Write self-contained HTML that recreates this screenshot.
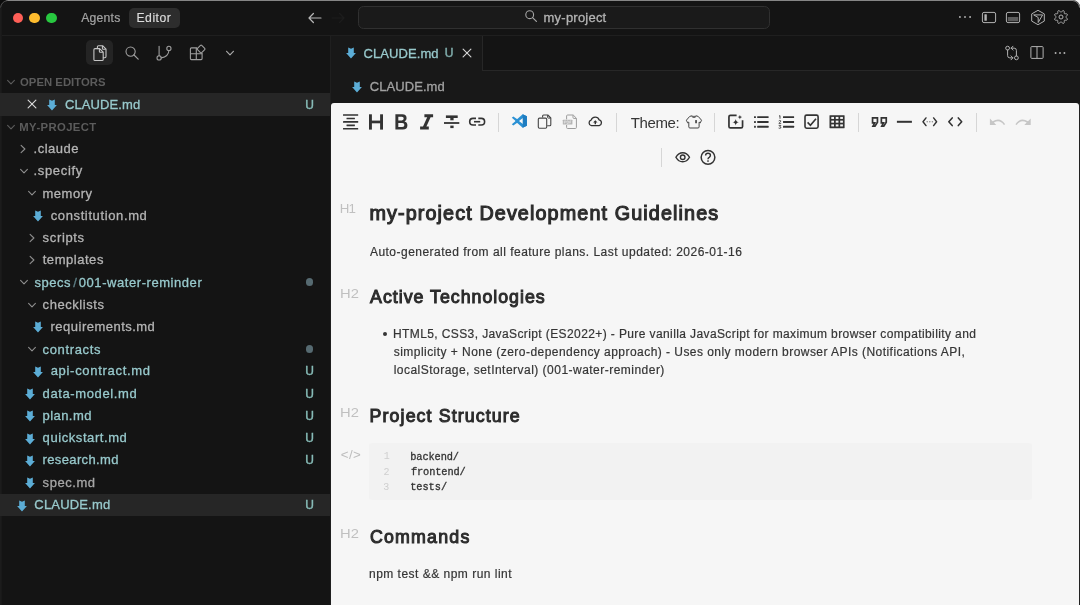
<!DOCTYPE html>
<html><head><meta charset="utf-8"><title>CLAUDE.md - my-project</title>
<style>

html,body{margin:0;padding:0;}
body{width:1080px;height:605px;position:relative;overflow:hidden;background:#141414;
 font-family:"Liberation Sans",sans-serif;}
.t{position:absolute;white-space:pre;line-height:1;}
.b{position:absolute;}
#txt{position:absolute;left:0;top:0;width:1080px;height:605px;will-change:transform;}
svg{position:absolute;overflow:visible;}

</style></head>
<body>

<!-- chrome -->
<div class="b" style="left:0;top:0;width:1080px;height:35px;background:#141414;border-bottom:1px solid #1f1f1f;"></div>
<div class="b" style="left:331px;top:36px;width:749px;height:67px;background:#181818;"></div>
<div class="b" style="left:482px;top:36px;width:597px;height:34px;background:#141414;border-bottom:1px solid #272727;border-left:1px solid #272727;"></div>
<div class="b" style="left:330px;top:36px;width:1px;height:569px;background:#1f1f1f;"></div>
<!-- window top edge -->
<div class="b" style="left:6px;top:0;width:1067px;height:1px;background:#868686;"></div>
<div class="b" style="left:0;top:8px;width:2px;height:597px;background:linear-gradient(90deg,#1e1e1e,#171717);"></div>
<svg style="left:0;top:0" width="10" height="10" viewBox="0 0 10 10"><path d="M0 0 L7 0 A7.5 7.5 0 0 0 0 7 Z" fill="#0c0c0c"/><path d="M0.6 7.6 A7.5 7.5 0 0 1 7.4 0.6" fill="none" stroke="#4c4c4c" stroke-width="1"/></svg>
<svg style="left:1070px;top:0" width="10" height="10" viewBox="0 0 10 10"><path d="M3 0 L10 0 L10 7.5 A7.5 7.5 0 0 0 3 0 Z" fill="#f2f2f2"/><path d="M2.5 0.5 A7.5 7.5 0 0 1 9.6 7.6" fill="none" stroke="#8a8a8a" stroke-width="1"/></svg>
<!-- traffic lights -->
<div class="b" style="left:12.6px;top:12.7px;width:10.6px;height:10.6px;border-radius:50%;background:#fe5f57;"></div>
<div class="b" style="left:29.3px;top:12.7px;width:10.6px;height:10.6px;border-radius:50%;background:#febc2e;"></div>
<div class="b" style="left:46.0px;top:12.7px;width:10.6px;height:10.6px;border-radius:50%;background:#28c840;"></div>
<!-- Editor pill -->
<div class="b" style="left:129px;top:7.5px;width:50.5px;height:20px;border-radius:5px;background:#2d2d2d;"></div>
<!-- search box -->
<div class="b" style="left:358px;top:5.9px;width:409.5px;height:21px;border-radius:5.5px;background:#1a1a1a;border:1px solid #303030;"></div>
<!-- activity active bg -->
<div class="b" style="left:86.3px;top:39.5px;width:26.7px;height:25.6px;border-radius:5px;background:#242424;"></div>
<!-- selected rows -->
<div class="b" style="left:0;top:93.3px;width:330px;height:22.5px;background:#262626;"></div>
<div class="b" style="left:0;top:494.1px;width:330px;height:21.9px;background:#262626;"></div>
<!-- git dots -->
<div class="b" style="left:305.8px;top:278.4px;width:7.6px;height:7.6px;border-radius:50%;background:#566a71;"></div>
<div class="b" style="left:305.8px;top:345.3px;width:7.6px;height:7.6px;border-radius:50%;background:#566a71;"></div>
<!-- markdown page -->
<div class="b" style="left:331px;top:103px;width:747.7px;height:502px;background:#f6f6f6;border-radius:3px 3px 0 0;"></div>
<div class="b" style="left:1078.7px;top:103px;width:1.3px;height:502px;background:#222;"></div>
<!-- toolbar dividers -->
<div class="b" style="left:498px;top:112.5px;width:1px;height:19px;background:#d6d6d6;"></div>
<div class="b" style="left:616px;top:112.5px;width:1px;height:19px;background:#d6d6d6;"></div>
<div class="b" style="left:714px;top:112.5px;width:1px;height:19px;background:#d6d6d6;"></div>
<div class="b" style="left:857.5px;top:112.5px;width:1px;height:19px;background:#d6d6d6;"></div>
<div class="b" style="left:976px;top:112.5px;width:1px;height:19px;background:#d6d6d6;"></div>
<div class="b" style="left:661px;top:148px;width:1px;height:19px;background:#d6d6d6;"></div>
<!-- code block -->
<div class="b" style="left:368.7px;top:442.5px;width:663px;height:57.5px;border-radius:3px;background:#f2f2f2;"></div>
<!-- list bullet -->
<div class="b" style="left:383.0px;top:332.0px;width:4.4px;height:4.4px;border-radius:50%;background:#353535;"></div>

<!-- text (own compositing layer => greyscale AA) -->
<div id="txt">
<span class="t" style="left:81.21px;top:12px;font-size:12.2px;color:#a4a4a4;letter-spacing:0.215px;-webkit-text-stroke:0.2px #a4a4a4;">Agents</span>
<span class="t" style="left:136.50px;top:12px;font-size:12.2px;color:#dedede;letter-spacing:0.491px;-webkit-text-stroke:0.15px #dedede;">Editor</span>
<span class="t" style="left:543.57px;top:11px;font-size:13px;color:#b4b4b4;letter-spacing:0.221px;-webkit-text-stroke:0.3px #b4b4b4;">my-project</span>
<span class="t" style="left:363.55px;top:47px;font-size:13px;color:#98c9cc;letter-spacing:0.071px;-webkit-text-stroke:0.3px #98c9cc;">CLAUDE.md</span>
<span class="t" style="left:444.69px;top:47px;font-size:12px;color:#7eaaa9;letter-spacing:-0.033px;-webkit-text-stroke:0.5px #7eaaa9;">U</span>
<span class="t" style="left:369.75px;top:80px;font-size:13px;color:#a2a2a2;letter-spacing:0.071px;-webkit-text-stroke:0.3px #a2a2a2;">CLAUDE.md</span>
<span class="t" style="left:20.03px;top:77px;font-size:11.3px;color:#5c5c5c;font-weight:bold;letter-spacing:0.035px;">OPEN EDITORS</span>
<span class="t" style="left:19.30px;top:122px;font-size:11.3px;color:#5c5c5c;font-weight:bold;letter-spacing:0.389px;">MY-PROJECT</span>
<span class="t" style="left:65.05px;top:98px;font-size:13px;color:#98c9cc;letter-spacing:0.096px;-webkit-text-stroke:0.3px #98c9cc;">CLAUDE.md</span>
<span class="t" style="left:33.54px;top:142px;font-size:13px;color:#b4b4b4;letter-spacing:0.511px;-webkit-text-stroke:0.3px #b4b4b4;">.claude</span>
<span class="t" style="left:33.54px;top:164px;font-size:13px;color:#b4b4b4;letter-spacing:0.661px;-webkit-text-stroke:0.3px #b4b4b4;">.specify</span>
<span class="t" style="left:42.47px;top:187px;font-size:13px;color:#b4b4b4;letter-spacing:0.519px;-webkit-text-stroke:0.3px #b4b4b4;">memory</span>
<span class="t" style="left:50.69px;top:209px;font-size:13px;color:#b4b4b4;letter-spacing:0.623px;-webkit-text-stroke:0.3px #b4b4b4;">constitution.md</span>
<span class="t" style="left:42.60px;top:231px;font-size:13px;color:#b4b4b4;letter-spacing:0.654px;-webkit-text-stroke:0.3px #b4b4b4;">scripts</span>
<span class="t" style="left:42.72px;top:253px;font-size:13px;color:#b4b4b4;letter-spacing:0.537px;-webkit-text-stroke:0.3px #b4b4b4;">templates</span>
<span class="t" style="left:34.40px;top:276px;font-size:13px;color:#98c9cc;letter-spacing:0.522px;-webkit-text-stroke:0.3px #98c9cc;">specs</span>
<span class="t" style="left:73.15px;top:276px;font-size:13px;color:#5f8087;letter-spacing:-0.980px;-webkit-text-stroke:0.3px #5f8087;">/</span>
<span class="t" style="left:78.80px;top:276px;font-size:13px;color:#98c9cc;letter-spacing:0.559px;-webkit-text-stroke:0.3px #98c9cc;">001-water-reminder</span>
<span class="t" style="left:42.59px;top:298px;font-size:13px;color:#b4b4b4;letter-spacing:0.558px;-webkit-text-stroke:0.3px #b4b4b4;">checklists</span>
<span class="t" style="left:50.57px;top:320px;font-size:13px;color:#b4b4b4;letter-spacing:0.482px;-webkit-text-stroke:0.3px #b4b4b4;">requirements.md</span>
<span class="t" style="left:42.59px;top:343px;font-size:13px;color:#98c9cc;letter-spacing:0.638px;-webkit-text-stroke:0.3px #98c9cc;">contracts</span>
<span class="t" style="left:50.68px;top:364px;font-size:13px;color:#98c9cc;letter-spacing:0.696px;-webkit-text-stroke:0.3px #98c9cc;">api-contract.md</span>
<span class="t" style="left:42.59px;top:387px;font-size:13px;color:#98c9cc;letter-spacing:0.621px;-webkit-text-stroke:0.3px #98c9cc;">data-model.md</span>
<span class="t" style="left:42.49px;top:409px;font-size:13px;color:#98c9cc;letter-spacing:0.453px;-webkit-text-stroke:0.3px #98c9cc;">plan.md</span>
<span class="t" style="left:42.59px;top:431px;font-size:13px;color:#98c9cc;letter-spacing:0.576px;-webkit-text-stroke:0.3px #98c9cc;">quickstart.md</span>
<span class="t" style="left:42.47px;top:453px;font-size:13px;color:#98c9cc;letter-spacing:0.384px;-webkit-text-stroke:0.3px #98c9cc;">research.md</span>
<span class="t" style="left:42.60px;top:476px;font-size:13px;color:#a6a6a6;letter-spacing:0.551px;-webkit-text-stroke:0.3px #a6a6a6;">spec.md</span>
<span class="t" style="left:34.35px;top:498px;font-size:13px;color:#98c9cc;letter-spacing:0.171px;-webkit-text-stroke:0.3px #98c9cc;">CLAUDE.md</span>
<span class="t" style="left:305.30px;top:99px;font-size:12px;color:#88bdb9;letter-spacing:0.969px;-webkit-text-stroke:0.4px #88bdb9;">U</span>
<span class="t" style="left:305.30px;top:365px;font-size:12px;color:#88bdb9;letter-spacing:0.969px;-webkit-text-stroke:0.4px #88bdb9;">U</span>
<span class="t" style="left:305.30px;top:388px;font-size:12px;color:#88bdb9;letter-spacing:0.969px;-webkit-text-stroke:0.4px #88bdb9;">U</span>
<span class="t" style="left:305.30px;top:410px;font-size:12px;color:#88bdb9;letter-spacing:0.969px;-webkit-text-stroke:0.4px #88bdb9;">U</span>
<span class="t" style="left:305.30px;top:432px;font-size:12px;color:#88bdb9;letter-spacing:0.969px;-webkit-text-stroke:0.4px #88bdb9;">U</span>
<span class="t" style="left:305.30px;top:454px;font-size:12px;color:#88bdb9;letter-spacing:0.969px;-webkit-text-stroke:0.4px #88bdb9;">U</span>
<span class="t" style="left:305.30px;top:499px;font-size:12px;color:#88bdb9;letter-spacing:0.969px;-webkit-text-stroke:0.4px #88bdb9;">U</span>
<span class="t" style="left:630.72px;top:115px;font-size:15px;color:#363636;letter-spacing:-0.378px;">Theme:</span>
<span class="t" style="left:339.75px;top:202px;font-size:13.3px;color:#c0c0c0;letter-spacing:-0.8px;">H1</span>
<span class="t" style="left:369.39px;top:204px;font-size:19.8px;color:#2c2c2c;letter-spacing:1.107px;-webkit-text-stroke:1.1px #2c2c2c;">my-project Development Guidelines</span>
<span class="t" style="left:369.91px;top:246px;font-size:12.0px;color:#353535;letter-spacing:0.480px;-webkit-text-stroke:0.2px #353535;">Auto-generated from all feature plans. Last updated: 2026-01-16</span>
<span class="t" style="left:339.68px;top:287px;font-size:13.3px;color:#c0c0c0;transform:scaleX(1.11);transform-origin:0 0;">H2</span>
<span class="t" style="left:370.09px;top:289px;font-size:17.8px;color:#2c2c2c;letter-spacing:0.986px;-webkit-text-stroke:1.0px #2c2c2c;">Active Technologies</span>
<span class="t" style="left:393.00px;top:328px;font-size:12.0px;color:#353535;letter-spacing:0.393px;-webkit-text-stroke:0.2px #353535;">HTML5, CSS3, JavaScript (ES2022+) - Pure vanilla JavaScript for maximum browser compatibility and</span>
<span class="t" style="left:393.77px;top:346px;font-size:12.0px;color:#353535;letter-spacing:0.455px;-webkit-text-stroke:0.2px #353535;">simplicity + None (zero-dependency approach) - Uses only modern browser APIs (Notifications API,</span>
<span class="t" style="left:393.67px;top:364px;font-size:12.0px;color:#353535;letter-spacing:0.477px;-webkit-text-stroke:0.2px #353535;">localStorage, setInterval) (001-water-reminder)</span>
<span class="t" style="left:339.68px;top:406px;font-size:13.3px;color:#c0c0c0;transform:scaleX(1.11);transform-origin:0 0;">H2</span>
<span class="t" style="left:369.59px;top:408px;font-size:17.8px;color:#2c2c2c;letter-spacing:1.107px;-webkit-text-stroke:1.0px #2c2c2c;">Project Structure</span>
<span class="t" style="left:340.87px;top:448px;font-size:13.3px;color:#bdbdbd;letter-spacing:0.366px;">&lt;/&gt;</span>
<span class="t" style="left:383.87px;top:452px;font-size:10px;color:#cfcfcf;font-family:'Liberation Mono',monospace;">1</span>
<span class="t" style="left:383.48px;top:468px;font-size:10px;color:#cfcfcf;font-family:'Liberation Mono',monospace;">2</span>
<span class="t" style="left:383.37px;top:483px;font-size:10px;color:#cfcfcf;font-family:'Liberation Mono',monospace;">3</span>
<span class="t" style="left:410.19px;top:452px;font-size:10.3px;color:#333;font-family:'Liberation Mono',monospace;letter-spacing:-0.081px;-webkit-text-stroke:0.3px #333;">backend/</span>
<span class="t" style="left:410.96px;top:467px;font-size:10.3px;color:#333;font-family:'Liberation Mono',monospace;letter-spacing:-0.100px;-webkit-text-stroke:0.3px #333;">frontend/</span>
<span class="t" style="left:410.15px;top:482px;font-size:10.3px;color:#333;font-family:'Liberation Mono',monospace;letter-spacing:-0.027px;-webkit-text-stroke:0.3px #333;">tests/</span>
<span class="t" style="left:339.68px;top:527px;font-size:13.3px;color:#c0c0c0;transform:scaleX(1.11);transform-origin:0 0;">H2</span>
<span class="t" style="left:369.89px;top:529px;font-size:17.8px;color:#2c2c2c;letter-spacing:1.221px;-webkit-text-stroke:1.0px #2c2c2c;">Commands</span>
<span class="t" style="left:368.98px;top:568px;font-size:12.0px;color:#353535;letter-spacing:0.488px;-webkit-text-stroke:0.2px #353535;">npm test &amp;&amp; npm run lint</span>
</div>

<!-- icons -->
<svg style="left:345.00px;top:47.20px" width="12" height="12" viewBox="-6 -6 12 12" ><path d="M-2.8 -5.5 L0 -4.3 L2.8 -5.5 L2.8 -0.1 L4.9 -0.1 L0 5.4 L-4.9 -0.1 L-2.8 -0.1 Z" fill="#5cadd6"/></svg>
<svg style="left:351.00px;top:80.80px" width="12" height="12" viewBox="-6 -6 12 12" ><path d="M-2.8 -5.5 L0 -4.3 L2.8 -5.5 L2.8 -0.1 L4.9 -0.1 L0 5.4 L-4.9 -0.1 L-2.8 -0.1 Z" fill="#5cadd6"/></svg>
<svg style="left:46.30px;top:98.50px" width="12" height="12" viewBox="-6 -6 12 12" ><path d="M-2.8 -5.5 L0 -4.3 L2.8 -5.5 L2.8 -0.1 L4.9 -0.1 L0 5.4 L-4.9 -0.1 L-2.8 -0.1 Z" fill="#5cadd6"/></svg>
<svg style="left:32.20px;top:209.90px" width="12" height="12" viewBox="-6 -6 12 12" ><path d="M-2.8 -5.5 L0 -4.3 L2.8 -5.5 L2.8 -0.1 L4.9 -0.1 L0 5.4 L-4.9 -0.1 L-2.8 -0.1 Z" fill="#5cadd6"/></svg>
<svg style="left:32.20px;top:321.30px" width="12" height="12" viewBox="-6 -6 12 12" ><path d="M-2.8 -5.5 L0 -4.3 L2.8 -5.5 L2.8 -0.1 L4.9 -0.1 L0 5.4 L-4.9 -0.1 L-2.8 -0.1 Z" fill="#5cadd6"/></svg>
<svg style="left:32.20px;top:365.86px" width="12" height="12" viewBox="-6 -6 12 12" ><path d="M-2.8 -5.5 L0 -4.3 L2.8 -5.5 L2.8 -0.1 L4.9 -0.1 L0 5.4 L-4.9 -0.1 L-2.8 -0.1 Z" fill="#5cadd6"/></svg>
<svg style="left:24.00px;top:388.14px" width="12" height="12" viewBox="-6 -6 12 12" ><path d="M-2.8 -5.5 L0 -4.3 L2.8 -5.5 L2.8 -0.1 L4.9 -0.1 L0 5.4 L-4.9 -0.1 L-2.8 -0.1 Z" fill="#5cadd6"/></svg>
<svg style="left:24.00px;top:410.42px" width="12" height="12" viewBox="-6 -6 12 12" ><path d="M-2.8 -5.5 L0 -4.3 L2.8 -5.5 L2.8 -0.1 L4.9 -0.1 L0 5.4 L-4.9 -0.1 L-2.8 -0.1 Z" fill="#5cadd6"/></svg>
<svg style="left:24.00px;top:432.70px" width="12" height="12" viewBox="-6 -6 12 12" ><path d="M-2.8 -5.5 L0 -4.3 L2.8 -5.5 L2.8 -0.1 L4.9 -0.1 L0 5.4 L-4.9 -0.1 L-2.8 -0.1 Z" fill="#5cadd6"/></svg>
<svg style="left:24.00px;top:454.98px" width="12" height="12" viewBox="-6 -6 12 12" ><path d="M-2.8 -5.5 L0 -4.3 L2.8 -5.5 L2.8 -0.1 L4.9 -0.1 L0 5.4 L-4.9 -0.1 L-2.8 -0.1 Z" fill="#5cadd6"/></svg>
<svg style="left:24.00px;top:477.26px" width="12" height="12" viewBox="-6 -6 12 12" ><path d="M-2.8 -5.5 L0 -4.3 L2.8 -5.5 L2.8 -0.1 L4.9 -0.1 L0 5.4 L-4.9 -0.1 L-2.8 -0.1 Z" fill="#5cadd6"/></svg>
<svg style="left:15.80px;top:499.54px" width="12" height="12" viewBox="-6 -6 12 12" ><path d="M-2.8 -5.5 L0 -4.3 L2.8 -5.5 L2.8 -0.1 L4.9 -0.1 L0 5.4 L-4.9 -0.1 L-2.8 -0.1 Z" fill="#5cadd6"/></svg>
<svg style="left:5.50px;top:76.80px" width="10" height="10" viewBox="-5 -5 10 10" ><path d="M-3.4 -1.7 L0 1.8 L3.4 -1.7" fill="none" stroke="#5c5c5c" stroke-width="1.1" stroke-linecap="round" stroke-linejoin="round"/></svg>
<svg style="left:5.50px;top:121.60px" width="10" height="10" viewBox="-5 -5 10 10" ><path d="M-3.4 -1.7 L0 1.8 L3.4 -1.7" fill="none" stroke="#5c5c5c" stroke-width="1.1" stroke-linecap="round" stroke-linejoin="round"/></svg>
<svg style="left:18.40px;top:143.56px" width="10" height="10" viewBox="-5 -5 10 10" ><path d="M-1.9 -3.6 L1.9 0 L-1.9 3.6" fill="none" stroke="#8e8e8e" stroke-width="1.1" stroke-linecap="round" stroke-linejoin="round"/></svg>
<svg style="left:18.60px;top:165.84px" width="10" height="10" viewBox="-5 -5 10 10" ><path d="M-3.4 -1.7 L0 1.8 L3.4 -1.7" fill="none" stroke="#8e8e8e" stroke-width="1.1" stroke-linecap="round" stroke-linejoin="round"/></svg>
<svg style="left:26.80px;top:188.12px" width="10" height="10" viewBox="-5 -5 10 10" ><path d="M-3.4 -1.7 L0 1.8 L3.4 -1.7" fill="none" stroke="#8e8e8e" stroke-width="1.1" stroke-linecap="round" stroke-linejoin="round"/></svg>
<svg style="left:26.60px;top:232.68px" width="10" height="10" viewBox="-5 -5 10 10" ><path d="M-1.9 -3.6 L1.9 0 L-1.9 3.6" fill="none" stroke="#8e8e8e" stroke-width="1.1" stroke-linecap="round" stroke-linejoin="round"/></svg>
<svg style="left:26.60px;top:254.96px" width="10" height="10" viewBox="-5 -5 10 10" ><path d="M-1.9 -3.6 L1.9 0 L-1.9 3.6" fill="none" stroke="#8e8e8e" stroke-width="1.1" stroke-linecap="round" stroke-linejoin="round"/></svg>
<svg style="left:18.60px;top:277.24px" width="10" height="10" viewBox="-5 -5 10 10" ><path d="M-3.4 -1.7 L0 1.8 L3.4 -1.7" fill="none" stroke="#8e8e8e" stroke-width="1.1" stroke-linecap="round" stroke-linejoin="round"/></svg>
<svg style="left:26.80px;top:299.52px" width="10" height="10" viewBox="-5 -5 10 10" ><path d="M-3.4 -1.7 L0 1.8 L3.4 -1.7" fill="none" stroke="#8e8e8e" stroke-width="1.1" stroke-linecap="round" stroke-linejoin="round"/></svg>
<svg style="left:26.80px;top:344.08px" width="10" height="10" viewBox="-5 -5 10 10" ><path d="M-3.4 -1.7 L0 1.8 L3.4 -1.7" fill="none" stroke="#8e8e8e" stroke-width="1.1" stroke-linecap="round" stroke-linejoin="round"/></svg>
<svg style="left:224.80px;top:48.20px" width="10" height="10" viewBox="-5 -5 10 10" ><path d="M-3.4 -1.7 L0 1.8 L3.4 -1.7" fill="none" stroke="#a8a8a8" stroke-width="1.2" stroke-linecap="round" stroke-linejoin="round"/></svg>
<svg style="left:26.30px;top:98.40px" width="12" height="12" viewBox="-6 -6 12 12" ><path d="M-3.9 -3.9 L3.9 3.9 M3.9 -3.9 L-3.9 3.9" fill="none" stroke="#d8d8d8" stroke-width="1.15" stroke-linecap="round"/></svg>
<svg style="left:461.20px;top:47.00px" width="12" height="12" viewBox="-6 -6 12 12" ><path d="M-3.9 -3.9 L3.9 3.9 M3.9 -3.9 L-3.9 3.9" fill="none" stroke="#d4d4d4" stroke-width="1.15" stroke-linecap="round"/></svg>
<svg style="left:306.60px;top:10.60px" width="16" height="14" viewBox="-8 -7 16 14" ><path d="M6 0 L-6 0 M-6 0 L-1.6 -4.5 M-6 0 L-1.6 4.5" transform="" fill="none" stroke="#b8b8b8" stroke-width="1.2" stroke-linecap="round" stroke-linejoin="round"/></svg>
<svg style="left:330.10px;top:10.60px" width="16" height="14" viewBox="-8 -7 16 14" ><path d="M-6 0 L6 0 M6 0 L1.6 -4.5 M6 0 L1.6 4.5" fill="none" stroke="#1d1d1d" stroke-width="1.2" stroke-linecap="round" stroke-linejoin="round"/></svg>
<svg style="left:523.70px;top:8.80px" width="14" height="14" viewBox="-7 -7 14 14" ><circle cx="-1.3" cy="-1.3" r="3.9" fill="none" stroke="#a6a6a6" stroke-width="1.1"/><path d="M1.6 1.6 L5.4 5.4" stroke="#a6a6a6" stroke-width="1.2" stroke-linecap="round"/></svg>
<svg style="left:957.10px;top:14.30px" width="16" height="6" viewBox="-8 -3 16 6" ><circle cx="-5.1" cy="0" r="0.95" fill="#b2b2b2"/><circle cx="0" cy="0" r="0.95" fill="#b2b2b2"/><circle cx="5.1" cy="0" r="0.95" fill="#b2b2b2"/></svg>
<svg style="left:981.10px;top:11.00px" width="16" height="13" viewBox="-8 -6.5 16 13" ><rect x="-6.6" y="-5.1" width="13.2" height="10.2" rx="1.6" fill="none" stroke="#b2b2b2" stroke-width="1"/><rect x="-4.6" y="-3.2" width="2.4" height="6.4" rx="0.5" fill="#b2b2b2"/></svg>
<svg style="left:1005.10px;top:11.00px" width="16" height="13" viewBox="-8 -6.5 16 13" ><rect x="-6.6" y="-5.1" width="13.2" height="10.2" rx="1.6" fill="none" stroke="#b2b2b2" stroke-width="1"/><rect x="-5.2" y="-0.4" width="10.4" height="4.2" rx="0.4" fill="#5c5c5c"/></svg>
<svg style="left:1029.70px;top:8.50px" width="16" height="17" viewBox="-8 -8.5 16 17" ><path d="M0 -7.2 L6.3 -3.6 L6.3 3.6 L0 7.2 L-6.3 3.6 L-6.3 -3.6 Z" fill="none" stroke="#b2b2b2" stroke-width="1" stroke-linejoin="round"/><path d="M-4.3 -2.6 L4.6 -2.6 L0.2 5.0 L0.2 0 Z" fill="none" stroke="#b2b2b2" stroke-width="1" stroke-linejoin="round"/></svg>
<svg style="left:1053.00px;top:9.20px" width="16" height="16" viewBox="-8 -8 16 16" ><path d="M0.00 -4.80 L0.32 -4.93 L0.70 -5.28 L1.14 -5.74 L1.65 -6.16 L2.17 -6.40 L2.64 -6.37 L2.99 -6.06 L3.19 -5.52 L3.25 -4.86 L3.24 -4.22 L3.26 -3.71 L3.39 -3.39 L3.71 -3.26 L4.22 -3.24 L4.86 -3.25 L5.52 -3.19 L6.06 -2.99 L6.37 -2.64 L6.40 -2.17 L6.16 -1.65 L5.74 -1.14 L5.28 -0.70 L4.93 -0.32 L4.80 0.00 L4.93 0.32 L5.28 0.70 L5.74 1.14 L6.16 1.65 L6.40 2.17 L6.37 2.64 L6.06 2.99 L5.52 3.19 L4.86 3.25 L4.22 3.24 L3.71 3.26 L3.39 3.39 L3.26 3.71 L3.24 4.22 L3.25 4.86 L3.19 5.52 L2.99 6.06 L2.64 6.37 L2.17 6.40 L1.65 6.16 L1.14 5.74 L0.70 5.28 L0.32 4.93 L0.00 4.80 L-0.32 4.93 L-0.70 5.28 L-1.14 5.74 L-1.65 6.16 L-2.17 6.40 L-2.64 6.37 L-2.99 6.06 L-3.19 5.52 L-3.25 4.86 L-3.24 4.22 L-3.26 3.71 L-3.39 3.39 L-3.71 3.26 L-4.22 3.24 L-4.86 3.25 L-5.52 3.19 L-6.06 2.99 L-6.37 2.64 L-6.40 2.17 L-6.16 1.65 L-5.74 1.14 L-5.28 0.70 L-4.93 0.32 L-4.80 0.00 L-4.93 -0.32 L-5.28 -0.70 L-5.74 -1.14 L-6.16 -1.65 L-6.40 -2.17 L-6.37 -2.64 L-6.06 -2.99 L-5.52 -3.19 L-4.86 -3.25 L-4.22 -3.24 L-3.71 -3.26 L-3.39 -3.39 L-3.26 -3.71 L-3.24 -4.22 L-3.25 -4.86 L-3.19 -5.52 L-2.99 -6.06 L-2.64 -6.37 L-2.17 -6.40 L-1.65 -6.16 L-1.14 -5.74 L-0.70 -5.28 L-0.32 -4.93 Z" fill="none" stroke="#b2b2b2" stroke-width="1" stroke-linejoin="round"/><circle cx="0" cy="0" r="2.0" fill="none" stroke="#b2b2b2" stroke-width="1"/></svg>
<svg style="left:1002.60px;top:44.35px" width="18" height="18" viewBox="-9 -9 18 18" ><circle cx="-4.4" cy="-4.85" r="1.9" fill="none" stroke="#b2b2b2" stroke-width="1"/>
<circle cx="4.4" cy="4.85" r="1.9" fill="none" stroke="#b2b2b2" stroke-width="1"/>
<path d="M-4.4 -2.95 L-4.4 2.6 Q-4.4 4.85 -2.2 4.85 L0.8 4.85 M-1.0 2.9 L0.9 4.85 L-1.0 6.8" fill="none" stroke="#b2b2b2" stroke-width="1" stroke-linecap="round" stroke-linejoin="round"/>
<path d="M4.4 2.95 L4.4 -2.6 Q4.4 -4.85 2.2 -4.85 L-0.8 -4.85 M1.0 -2.9 L-0.9 -4.85 L1.0 -6.8" fill="none" stroke="#b2b2b2" stroke-width="1" stroke-linecap="round" stroke-linejoin="round"/></svg>
<svg style="left:1028.50px;top:45.10px" width="16" height="15" viewBox="-8 -7.5 16 15" ><rect x="-6.1" y="-5.9" width="12.2" height="11.8" rx="0.8" fill="none" stroke="#b2b2b2" stroke-width="1"/><path d="M0 -5.9 L0 5.9" stroke="#b2b2b2" stroke-width="1"/></svg>
<svg style="left:1052.20px;top:50.10px" width="16" height="6" viewBox="-8 -3 16 6" ><circle cx="-4.4" cy="0" r="0.95" fill="#b2b2b2"/><circle cx="0" cy="0" r="0.95" fill="#b2b2b2"/><circle cx="4.4" cy="0" r="0.95" fill="#b2b2b2"/></svg>
<svg style="left:91.90px;top:44.00px" width="16" height="18" viewBox="-8 -9 16 18" ><path d="M-2.6 -4.4 L-2.6 -6.2 Q-2.6 -7.3 -1.5 -7.3 L2.6 -7.3 L6.0 -3.9 L6.0 3.6 Q6.0 4.7 4.9 4.7 L3.4 4.7" fill="none" stroke="#c6c6c6" stroke-width="1.1" stroke-linejoin="round" stroke-linecap="round"/>
<path d="M2.4 -7.1 L2.4 -4.6 Q2.4 -3.8 3.2 -3.8 L5.8 -3.8" fill="none" stroke="#c6c6c6" stroke-width="1.1"/>
<path d="M-5.0 -4.4 L-0.4 -4.4 L3.2 -0.8 L3.2 6.4 Q3.2 7.5 2.1 7.5 L-5.0 7.5 Q-6.1 7.5 -6.1 6.4 L-6.1 -3.3 Q-6.1 -4.4 -5.0 -4.4 Z" fill="none" stroke="#c6c6c6" stroke-width="1.1" stroke-linejoin="round"/>
<path d="M-0.6 -4.2 L-0.6 -1.6 Q-0.6 -0.8 0.2 -0.8 L3.0 -0.8" fill="none" stroke="#c6c6c6" stroke-width="1.1"/></svg>
<svg style="left:123.70px;top:45.10px" width="16" height="16" viewBox="-8 -8 16 16" ><circle cx="-1.4" cy="-1.4" r="4.6" fill="none" stroke="#9e9e9e" stroke-width="1.1"/><path d="M2.0 2.0 L6.2 6.2" stroke="#9e9e9e" stroke-width="1.2" stroke-linecap="round"/></svg>
<svg style="left:156.40px;top:45.00px" width="16" height="16" viewBox="-8 -8 16 16" ><circle cx="-4.9" cy="4.9" r="2.1" fill="none" stroke="#9e9e9e" stroke-width="1.1"/>
<circle cx="4.9" cy="-4.6" r="2.1" fill="none" stroke="#9e9e9e" stroke-width="1.1"/>
<path d="M-4.9 2.8 L-4.9 -6.6" fill="none" stroke="#9e9e9e" stroke-width="1.1" stroke-linecap="round"/>
<path d="M4.9 -2.5 Q4.6 3.6 -2.8 4.9" fill="none" stroke="#9e9e9e" stroke-width="1.1" stroke-linecap="round"/></svg>
<svg style="left:188.70px;top:44.10px" width="17" height="17" viewBox="-8.5 -8.5 17 17" ><path d="M-0.4 -4.6 L-6.1 -4.6 Q-7.1 -4.6 -7.1 -3.6 L-7.1 6.1 Q-7.1 7.1 -6.1 7.1 L3.6 7.1 Q4.6 7.1 4.6 6.1 L4.6 0.4" fill="none" stroke="#9e9e9e" stroke-width="1.1" stroke-linejoin="round"/>
<path d="M-7.1 1.2 L4.6 1.2 M-1.2 -4.6 L-1.2 7.1" fill="none" stroke="#9e9e9e" stroke-width="1.1"/>
<rect x="-3.0" y="-3.0" width="6.0" height="6.0" rx="0.9" transform="translate(3.6 -3.5) rotate(45)" fill="none" stroke="#9e9e9e" stroke-width="1.1"/></svg>
<svg style="left:340px;top:112px" width="22" height="20" viewBox="340 112 22 20"><rect x="343.0" y="114.20" width="15.20" height="1.6" rx="0.3" fill="#333333"/><rect x="346.5" y="117.65" width="8.40" height="1.6" rx="0.3" fill="#333333"/><rect x="343.0" y="121.10" width="15.20" height="1.6" rx="0.3" fill="#333333"/><rect x="346.5" y="124.55" width="8.40" height="1.6" rx="0.3" fill="#333333"/><rect x="343.0" y="128.00" width="15.20" height="1.6" rx="0.3" fill="#333333"/></svg>
<svg style="left:366px;top:112px" width="20" height="20" viewBox="366 112 20 20"><rect x="369" y="114.3" width="2.9" height="15.3" fill="#333333"/><rect x="380.1" y="114.3" width="2.9" height="15.3" fill="#333333"/><rect x="369" y="120.6" width="14" height="2.7" fill="#333333"/></svg>
<svg style="left:392px;top:112px" width="20" height="20" viewBox="392 112 20 20"><path fill-rule="evenodd" fill="#333333" d="M395.4 114.3 L402.3 114.3 Q406.6 114.3 406.6 118.2 Q406.6 120.7 404.5 121.5 Q407.4 122.3 407.4 125.3 Q407.4 129.6 402.8 129.6 L395.4 129.6 Z
M398.3 116.8 L398.3 120.4 L401.9 120.4 Q403.7 120.4 403.7 118.6 Q403.7 116.8 401.9 116.8 Z
M398.3 122.9 L398.3 127.1 L402.3 127.1 Q404.4 127.1 404.4 125.0 Q404.4 122.9 402.3 122.9 Z"/></svg>
<svg style="left:418px;top:112px" width="20" height="20" viewBox="418 112 20 20"><path fill="#333333" d="M424.4 114.3 L433.1 114.3 L433.1 117.3 L430.6 117.3 L426.4 126.6 L428.8 126.6 L428.8 129.6 L420.1 129.6 L420.1 126.6 L423.0 126.6 L427.2 117.3 L424.4 117.3 Z"/></svg>
<svg style="left:442px;top:112px" width="20" height="20" viewBox="442 112 20 20"><rect x="445.9" y="115.4" width="11.8" height="2.6" fill="#333333"/><rect x="450.3" y="117.9" width="3.3" height="2.4" fill="#333333"/><rect x="444" y="122.1" width="15.3" height="1.8" fill="#333333"/><rect x="450.3" y="125.6" width="3.3" height="2.5" fill="#333333"/></svg>
<svg style="left:467px;top:112px" width="20" height="20" viewBox="467 112 20 20"><path d="M476.0 118.4 L473.0 118.4 A3.3 3.3 0 0 0 473.0 125.0 L476.0 125.0 M478.3 118.4 L481.3 118.4 A3.3 3.3 0 0 1 481.3 125.0 L478.3 125.0" fill="none" stroke="#333333" stroke-width="1.6"/>
<path d="M474.0 121.7 L480.2 121.7" stroke="#333333" stroke-width="1.6"/></svg>
<svg style="left:510px;top:112px" width="20" height="20" viewBox="510 112 20 20"><path fill="#2b91d4" d="M522.7 114.3 L526.9 116.2 L526.9 125.8 L522.7 127.7 L515.0 121.0 Z M523.0 117.9 L518.8 121.0 L523.0 124.1 Z"/>
<path fill="#1f7dc1" d="M522.7 114.3 L526.9 116.2 L526.9 125.8 L522.7 127.7 Z"/>
<path fill="#2b91d4" d="M511.8 117.8 L513.3 116.5 L519.8 121.0 L513.3 125.5 L511.8 124.2 L515.7 121.0 Z"/></svg>
<svg style="left:535px;top:112px" width="20" height="20" viewBox="535 112 20 20"><path d="M542.6 117.4 L542.6 116.0 Q542.6 115.0 543.6 115.0 L547.8 115.0 L550.8 118.0 L550.8 124.8 Q550.8 125.8 549.8 125.8 L547.2 125.8" fill="none" stroke="#454545" stroke-width="1.1" stroke-linejoin="round"/>
<path d="M547.6 115.2 L547.6 117.4 Q547.6 118.1 548.3 118.1 L550.6 118.1" fill="none" stroke="#454545" stroke-width="1.0"/>
<rect x="538.3" y="118.1" width="8.4" height="10.2" rx="1.2" fill="none" stroke="#454545" stroke-width="1.1"/></svg>
<svg style="left:560px;top:112px" width="20" height="20" viewBox="560 112 20 20"><path d="M566.6 119.4 L566.6 116.0 Q566.6 115.0 567.6 115.0 L573.2 115.0 L576.4 118.2 L576.4 127.5 Q576.4 128.5 575.4 128.5 L567.6 128.5 Q566.6 128.5 566.6 127.5 L566.6 125.0" fill="none" stroke="#9c9c9c" stroke-width="1.0" stroke-linejoin="round"/>
<path d="M573.0 115.2 L573.0 117.6 Q573.0 118.4 573.8 118.4 L576.2 118.4" fill="none" stroke="#9c9c9c" stroke-width="1.0"/>
<rect x="562.8" y="119.7" width="9.6" height="4.9" rx="0.6" fill="#b4b4b4"/>
<path d="M564.3 123.6 L564.3 120.9 L565.3 120.9 Q566.0 120.9 566.0 121.6 Q566.0 122.3 565.3 122.3 L564.3 122.3 M567.0 120.9 L567.0 123.5 L567.8 123.5 Q568.8 123.5 568.8 122.2 Q568.8 120.9 567.8 120.9 Z M569.8 123.6 L569.8 120.9 L571.2 120.9 M569.8 122.2 L571.0 122.2" fill="none" stroke="#f0f0f0" stroke-width="0.6"/></svg>
<svg style="left:585px;top:112px" width="20" height="20" viewBox="585 112 20 20"><path d="M591.4 125.7 A2.9 2.9 0 0 1 591.1 120.1 A4.3 4.3 0 0 1 599.2 119.9 A3.0 3.0 0 0 1 599.2 125.7 Z" fill="none" stroke="#333333" stroke-width="1.3" stroke-linejoin="round"/>
<path fill="#333333" d="M595.3 120.2 L597.5 122.6 L596.0 122.6 L596.0 124.3 L594.6 124.3 L594.6 122.6 L593.1 122.6 Z"/></svg>
<svg style="left:684px;top:112px" width="20" height="20" viewBox="684 112 20 20"><path d="M691.3 115.9 L689.6 116.5 L686.4 120.2 L687.6 122.9 L688.8 122.1 L688.8 126.9 Q688.8 128.0 689.9 128.0 L698.0 128.0 Q699.1 128.0 699.1 126.9 L699.1 122.1 L700.3 122.9 L701.5 120.2 L698.3 116.5 L696.6 115.9 Q693.95 119.0 691.3 115.9 Z" fill="none" stroke="#454545" stroke-width="1.0" stroke-linejoin="round"/>
<path d="M691.5 116.0 Q693.95 116.9 696.4 116.0" fill="none" stroke="#454545" stroke-width="0.9"/>
<rect x="695.2" y="119.9" width="1.7" height="3.4" rx="0.4" fill="#454545"/></svg>
<svg style="left:726px;top:112px" width="20" height="20" viewBox="726 112 20 20"><path d="M736.6 115.35 L730.4 115.35 Q728.95 115.35 728.95 116.8 L728.95 126.4 Q728.95 127.85 730.4 127.85 L741.1 127.85 Q742.55 127.85 742.55 126.4 L742.55 120.2" fill="none" stroke="#333333" stroke-width="1.7" stroke-linejoin="round"/>
<path fill="#333333" d="M735.7 119.0 Q736.0 121.9 739.0 122.3 Q736.0 122.7 735.7 125.6 Q735.4 122.7 732.4 122.3 Q735.4 121.9 735.7 119.0 Z"/>
<path fill="#333333" d="M739.9 114.9 Q740.1 116.9 742.1 117.1 Q740.1 117.3 739.9 119.3 Q739.7 117.3 737.7 117.1 Q739.7 116.9 739.9 114.9 Z"/></svg>
<svg style="left:752px;top:112px" width="20" height="20" viewBox="752 112 20 20"><rect x="754.0" y="116.15" width="1.9" height="1.9" rx="0.4" fill="#333333"/><rect x="757.2" y="116.15" width="11.4" height="1.9" rx="0.3" fill="#333333"/><rect x="754.0" y="121.00" width="1.9" height="1.9" rx="0.4" fill="#333333"/><rect x="757.2" y="121.00" width="11.4" height="1.9" rx="0.3" fill="#333333"/><rect x="754.0" y="125.85" width="1.9" height="1.9" rx="0.4" fill="#333333"/><rect x="757.2" y="125.85" width="11.4" height="1.9" rx="0.3" fill="#333333"/></svg>
<svg style="left:776px;top:112px" width="20" height="20" viewBox="776 112 20 20"><rect x="783.0" y="116.15" width="11.1" height="1.9" rx="0.3" fill="#333333"/><rect x="783.0" y="121.00" width="11.1" height="1.9" rx="0.3" fill="#333333"/><rect x="783.0" y="125.85" width="11.1" height="1.9" rx="0.3" fill="#333333"/><path d="M779.0 116.2 L780.0 115.6 L780.0 118.7" fill="none" stroke="#333333" stroke-width="0.85"/><path d="M778.7 121.0 Q779.9 119.9 780.8 120.8 Q781.2 121.6 778.8 123.4 L781.2 123.4" fill="none" stroke="#333333" stroke-width="0.8"/><path d="M778.7 125.4 L780.9 125.4 L779.8 126.7 Q781.3 126.9 780.9 127.9 Q780.0 128.8 778.6 128.0" fill="none" stroke="#333333" stroke-width="0.8"/></svg>
<svg style="left:802px;top:112px" width="20" height="20" viewBox="802 112 20 20"><rect x="805.0" y="115.1" width="13.1" height="13.1" rx="1.6" fill="none" stroke="#333333" stroke-width="1.6"/>
<path d="M807.6 122.4 L810.4 125.2 L816.0 118.7" fill="none" stroke="#333333" stroke-width="1.6"/></svg>
<svg style="left:827px;top:112px" width="20" height="20" viewBox="827 112 20 20"><rect x="829.5" y="115.2" width="15.1" height="13.0" rx="0.4" fill="#333333"/><rect x="831.30" y="116.90" width="2.7" height="2.05" fill="#f6f6f6"/><rect x="835.75" y="116.90" width="2.7" height="2.05" fill="#f6f6f6"/><rect x="840.20" y="116.90" width="2.7" height="2.05" fill="#f6f6f6"/><rect x="831.30" y="120.65" width="2.7" height="2.05" fill="#f6f6f6"/><rect x="835.75" y="120.65" width="2.7" height="2.05" fill="#f6f6f6"/><rect x="840.20" y="120.65" width="2.7" height="2.05" fill="#f6f6f6"/><rect x="831.30" y="124.40" width="2.7" height="2.05" fill="#f6f6f6"/><rect x="835.75" y="124.40" width="2.7" height="2.05" fill="#f6f6f6"/><rect x="840.20" y="124.40" width="2.7" height="2.05" fill="#f6f6f6"/></svg>
<svg style="left:869px;top:112px" width="20" height="20" viewBox="869 112 20 20"><path d="M872.5500000000001 117.95 L877.45 117.95 L877.45 122.3 L875.0 126.2 L873.0 126.2 L874.7 122.9 L872.5500000000001 122.9 Z" fill="none" stroke="#333333" stroke-width="1.7" stroke-linejoin="miter"/><path d="M881.35 117.95 L886.25 117.95 L886.25 122.3 L883.8 126.2 L881.8 126.2 L883.5 122.9 L881.35 122.9 Z" fill="none" stroke="#333333" stroke-width="1.7" stroke-linejoin="miter"/></svg>
<svg style="left:894px;top:112px" width="20" height="20" viewBox="894 112 20 20"><rect x="896.9" y="120.8" width="15.0" height="2.0" fill="#333333"/></svg>
<svg style="left:920px;top:112px" width="20" height="20" viewBox="920 112 20 20"><path d="M926.0 117.9 L923.0 121.75 L926.0 125.6 M933.6 117.9 L936.6 121.75 L933.6 125.6" fill="none" stroke="#333333" stroke-width="1.45" stroke-linecap="round" stroke-linejoin="round"/>
<circle cx="927.2" cy="121.75" r="0.75" fill="#8a8a8a"/><circle cx="929.8" cy="121.75" r="0.75" fill="#8a8a8a"/><circle cx="932.4" cy="121.75" r="0.75" fill="#8a8a8a"/></svg>
<svg style="left:945px;top:112px" width="20" height="20" viewBox="945 112 20 20"><path d="M952.2 117.9 L948.8 121.75 L952.2 125.6 M958.3 117.9 L961.7 121.75 L958.3 125.6" fill="none" stroke="#333333" stroke-width="1.55" stroke-linecap="round" stroke-linejoin="round"/></svg>
<svg style="left:987px;top:112px" width="20" height="20" viewBox="987 112 20 20"><path d="M989.9 118.6 L989.9 125.0 L996.3 125.0 L993.9 122.6 Q999.6 118.8 1003.9 124.9 L1005.2 124.3 Q1000.2 116.6 992.6 121.3 Z" fill="#c6c6c6"/></svg>
<svg style="left:1013px;top:112px" width="20" height="20" viewBox="1013 112 20 20"><path d="M1030.7 118.6 L1030.7 125.0 L1024.3 125.0 L1026.7 122.6 Q1021.0 118.8 1016.7 124.9 L1015.4 124.3 Q1020.4 116.6 1028.0 121.3 Z" fill="#c6c6c6"/></svg>
<svg style="left:673px;top:148px" width="20" height="20" viewBox="673 148 20 20"><path d="M675.9 157.25 C678.0 153.6 680.6 152.7 682.7 152.7 C684.8 152.7 687.4 153.6 689.5 157.25 C687.4 160.9 684.8 161.8 682.7 161.8 C680.6 161.8 678.0 160.9 675.9 157.25 Z" fill="none" stroke="#333333" stroke-width="1.45" stroke-linejoin="round"/>
<circle cx="682.7" cy="157.25" r="2.3" fill="none" stroke="#333333" stroke-width="1.4"/></svg>
<svg style="left:698px;top:148px" width="20" height="20" viewBox="698 148 20 20"><circle cx="708.0" cy="157.35" r="6.85" fill="none" stroke="#333333" stroke-width="1.5"/>
<path d="M705.6 155.4 Q705.6 153.2 708.0 153.2 Q710.4 153.2 710.4 155.3 Q710.4 156.5 709.2 157.3 Q708.0 158.0 708.0 159.3" fill="none" stroke="#333333" stroke-width="1.45"/>
<rect x="707.25" y="160.3" width="1.5" height="1.5" fill="#333333"/></svg>

</body></html>
